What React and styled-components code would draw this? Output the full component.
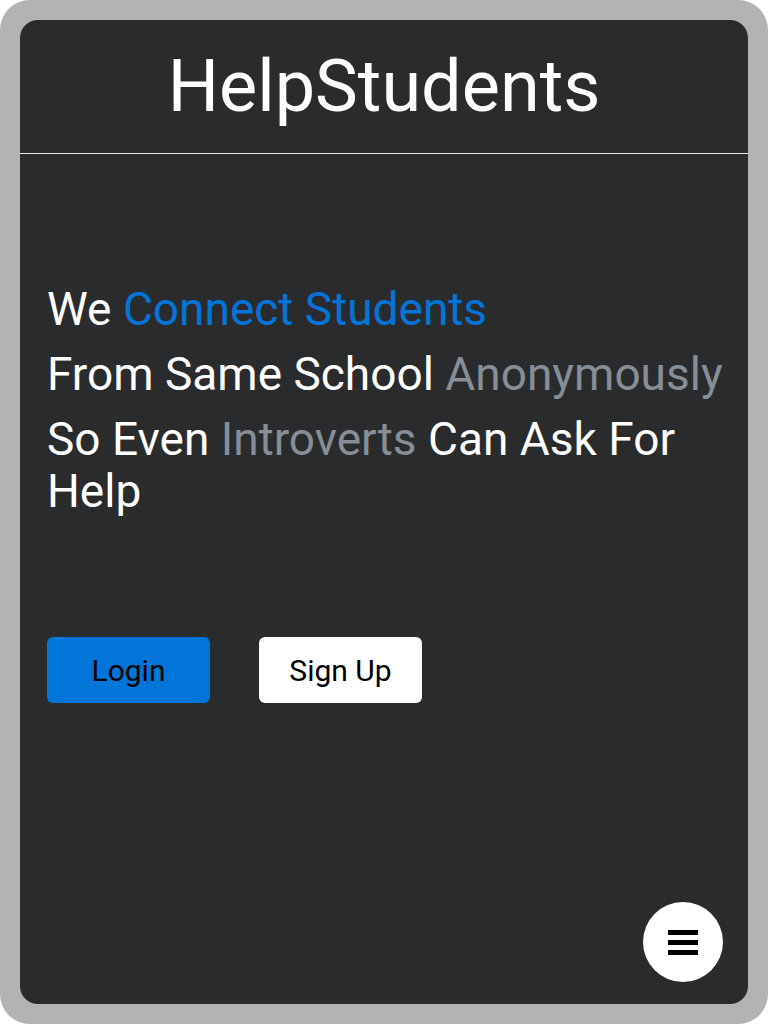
import React from 'react';
import styled, { createGlobalStyle } from 'styled-components';

const GlobalStyle = createGlobalStyle`
  html, body {
    margin: 0;
    padding: 0;
    background: #ffffff;
    font-family: Roboto, "Liberation Sans", sans-serif;
  }
`;

const Frame = styled.div`
  box-sizing: border-box;
  width: 768px;
  height: 1024px;
  padding: 20px;
  background: #b3b3b3;
  border-radius: 30px;
`;

const Screen = styled.div`
  position: relative;
  display: flex;
  flex-direction: column;
  height: 100%;
  background: #2a2b2d;
  border-radius: 18px;
  overflow: hidden;
`;

const Header = styled.header`
  display: flex;
  align-items: center;
  justify-content: center;
  height: 133px;
  border-bottom: 1px solid #e6e6e6;
`;

const Title = styled.h1`
  margin: 0;
  color: #ffffff;
  font-size: 72px;
  font-weight: 400;
  line-height: 1;
`;

const Main = styled.main`
  display: flex;
  flex-direction: column;
  padding: 129px 12px 0 27px;
`;

const Tagline = styled.p`
  margin: 0 0 13px;
  color: #ffffff;
  font-size: 46px;
  line-height: 52px;
`;

const Accent = styled.span`
  color: ${(p) => (p.$tone === 'blue' ? '#0275d8' : '#868e96')};
`;

const Actions = styled.div`
  display: flex;
  gap: 49px;
  margin-top: 107px;
`;

const Button = styled.button`
  width: 163px;
  height: 66px;
  padding: 0;
  border: none;
  border-radius: 6px;
  background: ${(p) => (p.$primary ? '#0275d8' : '#ffffff')};
  color: #000000;
  font-family: Roboto, "Liberation Sans", sans-serif;
  font-size: 30px;
  cursor: pointer;
`;

const MenuButton = styled.button`
  position: absolute;
  right: 25px;
  bottom: 22px;
  display: flex;
  flex-direction: column;
  align-items: center;
  justify-content: center;
  gap: 5px;
  width: 80px;
  height: 80px;
  border: none;
  border-radius: 50%;
  background: #ffffff;
  cursor: pointer;
`;

const Bar = styled.span`
  display: block;
  width: 30px;
  height: 5px;
  background: #000000;
`;

export default function App() {
  return (
    <>
      <GlobalStyle />
      <Frame>
        <Screen>
          <Header>
            <Title>HelpStudents</Title>
          </Header>
          <Main>
            <Tagline>
              We <Accent $tone="blue">Connect Students</Accent>
            </Tagline>
            <Tagline>
              From Same School <Accent>Anonymously</Accent>
            </Tagline>
            <Tagline>
              So Even <Accent>Introverts</Accent> Can Ask For Help
            </Tagline>
            <Actions>
              <Button $primary>Login</Button>
              <Button>Sign Up</Button>
            </Actions>
          </Main>
          <MenuButton aria-label="Menu">
            <Bar />
            <Bar />
            <Bar />
          </MenuButton>
        </Screen>
      </Frame>
    </>
  );
}
